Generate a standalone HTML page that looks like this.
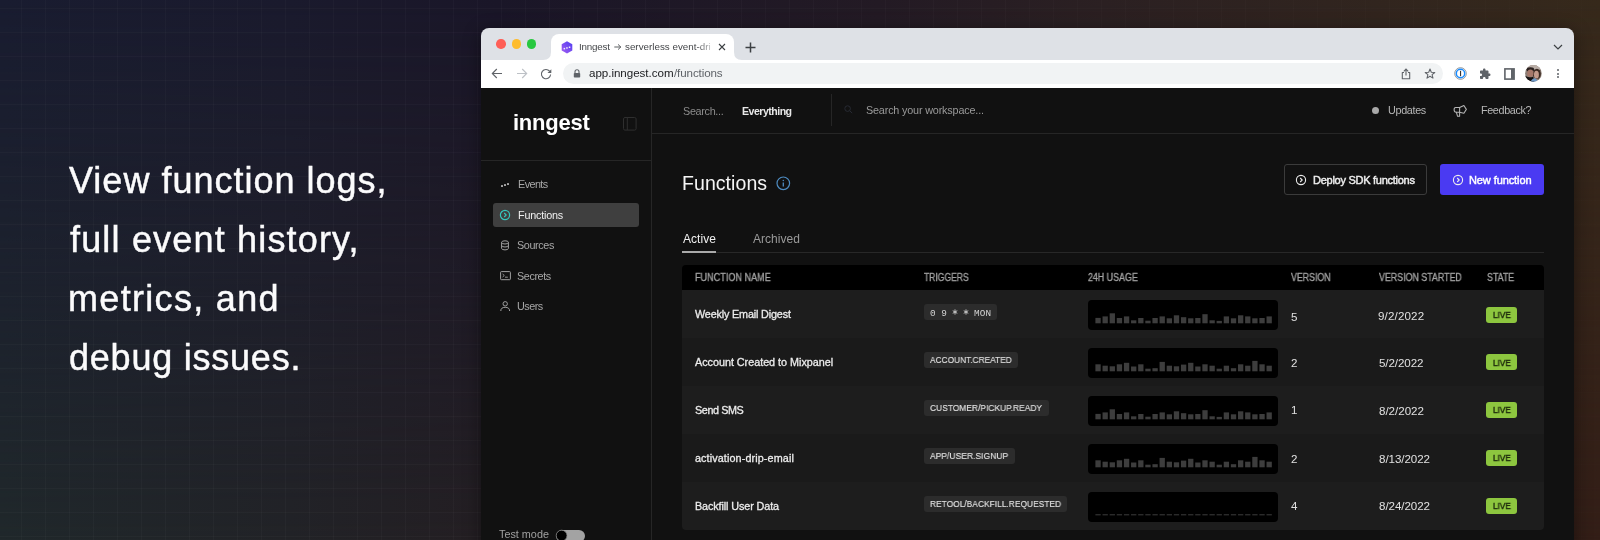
<!DOCTYPE html>
<html><head><meta charset="utf-8">
<style>
html,body{margin:0;padding:0;width:1600px;height:540px;overflow:hidden;}
body{position:relative;font-family:"Liberation Sans",sans-serif;background:#1c1c2a;}
.bg{position:absolute;left:0;top:0;width:1600px;height:540px;
 background:linear-gradient(90deg,#20282b 0%,#222327 18%,#241f23 30%,#2b2020 60%,#331e17 100%);}
.bg2{position:absolute;left:0;top:0;width:1600px;height:540px;
 background:linear-gradient(90deg,#191c30 0%,#1a1a2d 18%,#1a1628 31%,#231a24 55%,#2b2022 69%,#36291b 100%);
 -webkit-mask-image:linear-gradient(180deg,#000 0%,rgba(0,0,0,0.55) 50%,rgba(0,0,0,0) 100%);}
.grid{position:absolute;left:0;top:0;width:1600px;height:540px;
 background-image:
  linear-gradient(90deg, rgba(255,255,255,0.022) 1px, transparent 1px),
  linear-gradient(180deg, rgba(255,255,255,0.022) 1px, transparent 1px);
 background-size:24px 24px;background-position:21px 8px;
 -webkit-mask-image:linear-gradient(90deg,#000 0%,#000 40%,rgba(0,0,0,0.35) 100%);}
.shadow{position:absolute;left:481px;top:28px;width:1093px;height:540px;border-radius:8px 8px 0 0;box-shadow:0 4px 18px rgba(0,0,0,0.45);}
.tx{position:absolute;white-space:nowrap;transform-origin:0 0;will-change:transform;}
.abs{position:absolute;}
</style></head><body>
<div class="bg"></div>
<div class="bg2"></div>
<div class="grid"></div>
<div class="shadow"></div>

<div class="abs" style="left:481px;top:28px;width:1093px;height:32px;background:#dee1e6;border-radius:8px 8px 0 0;"></div>
<div class="abs" style="left:496.45px;top:39.45px;width:9.5px;height:9.5px;background:#fe5f57;border-radius:50%;"></div>
<div class="abs" style="left:511.65px;top:39.45px;width:9.5px;height:9.5px;background:#febc2e;border-radius:50%;"></div>
<div class="abs" style="left:526.85px;top:39.45px;width:9.5px;height:9.5px;background:#28c840;border-radius:50%;"></div>
<div class="abs" style="left:551px;top:34px;width:183px;height:26px;background:#ffffff;border-radius:8px 8px 0 0;"></div>
<svg class="abs" style="left:543px;top:52px" width="8" height="8"><path d="M0 8 Q8 8 8 0 L8 8 Z" fill="#fff"/></svg>
<svg class="abs" style="left:734px;top:52px" width="8" height="8"><path d="M8 8 Q0 8 0 0 L0 8 Z" fill="#fff"/></svg>
<svg class="abs" style="left:560.5px;top:40.5px" width="12" height="13" viewBox="0 0 12 13">
<defs><linearGradient id="fg" x1="1" y1="0" x2="0" y2="1"><stop offset="0" stop-color="#4f3df0"/><stop offset="1" stop-color="#a45ef2"/></linearGradient></defs>
<path d="M6 0.3 L11.3 3.3 L11.3 9.5 L6 12.6 L0.7 9.5 L0.7 3.3 Z" fill="url(#fg)"/>
<rect x="2.6" y="6.9" width="1.5" height="1.5" fill="#fff" opacity=".9"/><rect x="5.2" y="6.2" width="1.5" height="1.5" fill="#fff" opacity=".9"/><rect x="7.8" y="5.5" width="1.5" height="1.5" fill="#fff" opacity=".9"/>
</svg>
<svg class="abs" style="left:718px;top:43px" width="8" height="8"><path d="M1 1 L7 7 M7 1 L1 7" stroke="#3c4043" stroke-width="1.1"/></svg>
<svg class="abs" style="left:614px;top:43.8px" width="8" height="6"><path d="M0.3 3 H6.8 M4 0.4 L6.8 3 L4 5.6" stroke="#55585c" stroke-width="0.95" fill="none"/></svg>
<svg class="abs" style="left:745px;top:41.5px" width="11" height="11"><path d="M5.5 0.5 V10.5 M0.5 5.5 H10.5" stroke="#3c4043" stroke-width="1.5"/></svg>
<svg class="abs" style="left:1553px;top:44px" width="10" height="6"><path d="M1 1 L5 5 L9 1" stroke="#3c4043" stroke-width="1.2" fill="none"/></svg>
<div class="abs" style="left:481px;top:60px;width:1093px;height:28px;background:#ffffff;"></div>
<div class="abs" style="left:563px;top:63px;width:880px;height:21px;background:#f1f3f4;border-radius:10.5px;"></div>
<svg class="abs" style="left:491px;top:68px" width="12" height="11"><path d="M11 5.5 H1.5 M5.8 1 L1.3 5.5 L5.8 10" stroke="#5f6368" stroke-width="1.1" fill="none"/></svg>
<svg class="abs" style="left:516px;top:68px" width="12" height="11"><path d="M1 5.5 H10.5 M6.2 1 L10.7 5.5 L6.2 10" stroke="#bdc1c6" stroke-width="1.1" fill="none"/></svg>
<svg class="abs" style="left:540px;top:67.5px" width="12" height="12"><path d="M9.6 3.2 A4.6 4.6 0 1 0 10.6 6.5" stroke="#5f6368" stroke-width="1.1" fill="none"/><path d="M11.3 1.2 L11.3 5 L7.5 5 Z" fill="#5f6368"/></svg>
<svg class="abs" style="left:573px;top:69px" width="8" height="9"><path d="M2 4 V2.8 A2 2 0 0 1 6 2.8 V4" stroke="#5f6368" stroke-width="1.1" fill="none"/><rect x="0.8" y="4" width="6.4" height="4.6" rx="0.8" fill="#5f6368"/></svg>
<svg class="abs" style="left:1400.5px;top:67.5px" width="10" height="12"><path d="M3 4.5 H1.3 V10.8 H8.7 V4.5 H7" stroke="#5f6368" stroke-width="1.1" fill="none" stroke-linejoin="round"/><path d="M5 1.2 V7.5 M2.8 3.3 L5 1.1 L7.2 3.3" stroke="#5f6368" stroke-width="1.1" fill="none"/></svg>
<svg class="abs" style="left:1424px;top:68px" width="12" height="11" viewBox="0 0 24 22"><path d="M12 2 L14.6 8.6 L21.6 9 L16.2 13.4 L18 20.2 L12 16.4 L6 20.2 L7.8 13.4 L2.4 9 L9.4 8.6 Z" stroke="#5f6368" stroke-width="2.1" fill="none" stroke-linejoin="round"/></svg>
<svg class="abs" style="left:1454px;top:67px" width="13" height="13"><circle cx="6.5" cy="6.5" r="5.8" fill="#fff" stroke="#6b6b6b" stroke-width="0.7"/><circle cx="6.5" cy="6.5" r="4.2" fill="#fff" stroke="#1a8cff" stroke-width="1.5"/><rect x="6" y="3.8" width="1.1" height="5.4" fill="#333"/></svg>
<svg class="abs" style="left:1479px;top:67.5px" width="12" height="12" viewBox="0 0 24 24"><path d="M20.5 11H19V7c0-1.1-.9-2-2-2h-4V3.5C13 2.12 11.88 1 10.5 1S8 2.12 8 3.5V5H4c-1.1 0-1.99.9-1.99 2v3.8H3.5c1.49 0 2.7 1.21 2.7 2.7s-1.21 2.7-2.7 2.7H2V20c0 1.1.9 2 2 2h3.8v-1.5c0-1.49 1.21-2.7 2.7-2.7 1.49 0 2.7 1.21 2.7 2.7V22H17c1.1 0 2-.9 2-2v-4h1.5c1.38 0 2.5-1.12 2.5-2.5S21.88 11 20.5 11z" fill="#5f6368"/></svg>
<svg class="abs" style="left:1503.5px;top:67.5px" width="11" height="12"><rect x="0.9" y="0.9" width="9.2" height="10.2" fill="none" stroke="#5f6368" stroke-width="1.6"/><rect x="7" y="1" width="3" height="10" fill="#5f6368"/></svg>
<svg class="abs" style="left:1525px;top:65px" width="16.8" height="16.8" viewBox="70 65 375 375"><defs><clipPath id="av"><circle cx="257.5" cy="252.5" r="186"/></clipPath></defs>
<g clip-path="url(#av)"><rect x="0" y="0" width="600" height="600" fill="#8c7e76"/><ellipse cx="300" cy="110" rx="160" ry="70" fill="#b9ada6"/>
<ellipse cx="335" cy="265" rx="88" ry="115" fill="#3a2820"/><ellipse cx="325" cy="280" rx="55" ry="88" fill="#c29a8b"/>
<ellipse cx="190" cy="168" rx="88" ry="55" fill="#2a211f"/><ellipse cx="190" cy="250" rx="70" ry="85" fill="#a6786a"/>
<path d="M60 290 Q120 360 255 325 L280 460 L60 460 Z" fill="#161212"/><path d="M185 460 Q215 365 300 360 Q345 385 360 460 Z" fill="#6d98c6"/></g></svg>
<div class="abs" style="left:1556.7px;top:68.60000000000001px;width:2.2px;height:2.2px;background:#5f6368;border-radius:50%;"></div>
<div class="abs" style="left:1556.7px;top:72.5px;width:2.2px;height:2.2px;background:#5f6368;border-radius:50%;"></div>
<div class="abs" style="left:1556.7px;top:76.30000000000001px;width:2.2px;height:2.2px;background:#5f6368;border-radius:50%;"></div>
<div class="abs" style="left:481px;top:88px;width:1093px;height:452px;background:#111111;"></div>
<div class="abs" style="left:651px;top:88px;width:1px;height:452px;background:#262626;"></div>
<div class="abs" style="left:481px;top:159.5px;width:170px;height:1px;background:#262626;"></div>
<div class="abs" style="left:652px;top:133px;width:922px;height:1px;background:#262626;"></div>
<div class="abs" style="left:831px;top:94px;width:1px;height:32px;background:#262626;"></div>
<svg class="abs" style="left:623px;top:117px" width="14" height="14"><rect x="0.5" y="0.5" width="12.6" height="12.6" rx="1.5" fill="none" stroke="#2f2f2f" stroke-width="1"/><path d="M4.3 0.5 V13" stroke="#2f2f2f" stroke-width="1"/></svg>
<div class="abs" style="left:493px;top:202.5px;width:146px;height:24.7px;background:#3f3f3f;border-radius:3px;"></div>
<div class="abs" style="left:500.9px;top:184.9px;width:2px;height:2px;background:#a8a8a8;border-radius:0.5px;"></div>
<div class="abs" style="left:504px;top:183.8px;width:2px;height:2px;background:#a8a8a8;border-radius:0.5px;"></div>
<div class="abs" style="left:507px;top:182.8px;width:2px;height:2px;background:#a8a8a8;border-radius:0.5px;"></div>
<svg class="abs" style="left:499px;top:209px" width="12" height="12"><circle cx="6" cy="6" r="4.6" fill="none" stroke="#36c6bd" stroke-width="1.2"/><path d="M5.2 4 L7.2 6 L5.2 8" fill="none" stroke="#36c6bd" stroke-width="1.1"/></svg>
<svg class="abs" style="left:500px;top:240px" width="10" height="11"><ellipse cx="5" cy="2.4" rx="3.4" ry="1.6" fill="none" stroke="#a0a0a0" stroke-width="1"/><path d="M1.6 2.4 V8.3 A3.4 1.6 0 0 0 8.4 8.3 V2.4 M1.6 5.4 A3.4 1.6 0 0 0 8.4 5.4" fill="none" stroke="#a0a0a0" stroke-width="1"/></svg>
<svg class="abs" style="left:499.5px;top:271.3px" width="11" height="9.5"><rect x="0.6" y="0.6" width="9.8" height="8.1" rx="0.8" fill="none" stroke="#a0a0a0" stroke-width="1"/><path d="M2.6 3 L4.3 4.5 L2.6 6 M5 6.2 H7.8" fill="none" stroke="#a0a0a0" stroke-width="0.9"/></svg>
<svg class="abs" style="left:500px;top:301px" width="10.5" height="10.5"><circle cx="5.2" cy="2.8" r="2.2" fill="none" stroke="#a0a0a0" stroke-width="1"/><path d="M0.8 10 Q0.8 6.3 5.2 6.3 Q9.6 6.3 9.6 10" fill="none" stroke="#a0a0a0" stroke-width="1"/></svg>
<div class="abs" style="left:556px;top:529.6px;width:29px;height:12px;background:#a3a3a3;border-radius:6px;"></div>
<svg class="abs" style="left:555px;top:529px" width="14" height="14"><circle cx="6.6" cy="6.6" r="5.4" fill="#000" stroke="#8a8a8a" stroke-width="0.7"/></svg>
<svg class="abs" style="left:844px;top:105px" width="9" height="9"><circle cx="3.6" cy="3.6" r="2.8" fill="none" stroke="#272a33" stroke-width="1"/><path d="M5.6 5.6 L8.2 8.2" stroke="#272a33" stroke-width="1"/></svg>
<div class="abs" style="left:1371.5px;top:106.5px;width:7.8px;height:7.8px;background:#a9a9a9;border-radius:50%;"></div>
<svg class="abs" style="left:1448px;top:100px" width="24" height="22" viewBox="0 0 589 540"><g fill="none" stroke="#b5b5b5" stroke-width="26" stroke-linejoin="round" stroke-linecap="round"><path d="M285 185 L185 185 Q150 185 150 240 Q150 300 200 300 L285 300 Z"/><path d="M285 185 L390 135 L450 230 L390 325 L285 300"/><path d="M205 300 L235 400 L285 400 L285 300"/></g></svg>
<svg class="abs" style="left:775.5px;top:175.9px" width="15" height="15"><circle cx="7.3" cy="7.3" r="6.3" fill="none" stroke="#4e8cc2" stroke-width="1.2"/><path d="M7.3 6.4 V10.4" stroke="#4e8cc2" stroke-width="1.3"/><circle cx="7.3" cy="4.5" r="0.75" fill="#4e8cc2"/></svg>
<div class="abs" style="left:682px;top:251.5px;width:862px;height:1.3px;background:#282828;"></div>
<div class="abs" style="left:682.2px;top:251px;width:33.8px;height:2px;background:#aaaaaa;"></div>
<div class="abs" style="left:1283.8px;top:164px;width:143.4px;height:30.8px;background:transparent;border:1px solid #3b3b3b;border-radius:3px;box-sizing:border-box;"></div>
<div class="abs" style="left:1440px;top:164px;width:104px;height:31px;background:#4a3af2;border-radius:3px;"></div>
<svg class="abs" style="left:1295.2px;top:174px" width="12" height="12"><circle cx="6" cy="6" r="4.6" fill="none" stroke="#ededed" stroke-width="1.1"/><path d="M5.2 4 L7.2 6 L5.2 8" fill="none" stroke="#ededed" stroke-width="1.1"/></svg>
<svg class="abs" style="left:1451.8px;top:174px" width="12" height="12"><circle cx="6" cy="6" r="4.6" fill="none" stroke="#ededed" stroke-width="1.1"/><path d="M5.2 4 L7.2 6 L5.2 8" fill="none" stroke="#ededed" stroke-width="1.1"/></svg>
<div class="abs" style="left:682px;top:265px;width:862px;height:265px;border-radius:4px;overflow:hidden;">
<div class="abs" style="left:0;top:0;width:862px;height:25px;background:#000;"></div>
<div class="abs" style="left:0;top:25px;width:862px;height:48px;background:#1d1d1d;"></div>
<div class="abs" style="left:0;top:73px;width:862px;height:48px;background:#1a1a1a;"></div>
<div class="abs" style="left:0;top:121px;width:862px;height:48px;background:#1d1d1d;"></div>
<div class="abs" style="left:0;top:169px;width:862px;height:48px;background:#1a1a1a;"></div>
<div class="abs" style="left:0;top:217px;width:862px;height:48px;background:#1d1d1d;"></div>
</div>
<div class="abs" style="left:924.2px;top:304.2px;width:72.6px;height:15.6px;background:#2c2c2c;border-radius:3px;"></div>
<div class="abs" style="left:1088px;top:299.8px;width:190px;height:30px;background:#000;border-radius:4px;"></div>
<div class="abs" style="left:1486.2px;top:306.9px;width:30.6px;height:16px;background:#8dc63f;border-radius:3px;"></div>
<div class="abs" style="left:924.2px;top:352.2px;width:94px;height:15.6px;background:#2c2c2c;border-radius:3px;"></div>
<div class="abs" style="left:1088px;top:347.8px;width:190px;height:30px;background:#000;border-radius:4px;"></div>
<div class="abs" style="left:1486.2px;top:354.2px;width:30.6px;height:16px;background:#8dc63f;border-radius:3px;"></div>
<div class="abs" style="left:924.2px;top:400.2px;width:124.4px;height:15.6px;background:#2c2c2c;border-radius:3px;"></div>
<div class="abs" style="left:1088px;top:395.8px;width:190px;height:30px;background:#000;border-radius:4px;"></div>
<div class="abs" style="left:1486.2px;top:402px;width:30.6px;height:16px;background:#8dc63f;border-radius:3px;"></div>
<div class="abs" style="left:924.2px;top:448.2px;width:90.6px;height:15.6px;background:#2c2c2c;border-radius:3px;"></div>
<div class="abs" style="left:1088px;top:443.8px;width:190px;height:30px;background:#000;border-radius:4px;"></div>
<div class="abs" style="left:1486.2px;top:450.1px;width:30.6px;height:16px;background:#8dc63f;border-radius:3px;"></div>
<div class="abs" style="left:924.2px;top:496.2px;width:143px;height:15.6px;background:#2c2c2c;border-radius:3px;"></div>
<div class="abs" style="left:1088px;top:491.8px;width:190px;height:30px;background:#000;border-radius:4px;"></div>
<div class="abs" style="left:1486.2px;top:498px;width:30.6px;height:16px;background:#8dc63f;border-radius:3px;"></div>
<svg class="abs" style="left:1088px;top:299.8px" width="190" height="30" fill="#3d3d3d"><rect x="7.40" y="17.90" width="5.3" height="5.4"/><rect x="14.53" y="16.40" width="5.3" height="6.9"/><rect x="21.66" y="13.30" width="5.3" height="10"/><rect x="28.79" y="18.00" width="5.3" height="5.3"/><rect x="35.92" y="16.40" width="5.3" height="6.9"/><rect x="43.05" y="20.30" width="5.3" height="3"/><rect x="50.18" y="18.00" width="5.3" height="5.3"/><rect x="57.31" y="20.70" width="5.3" height="2.6"/><rect x="64.44" y="18.00" width="5.3" height="5.3"/><rect x="71.57" y="16.40" width="5.3" height="6.9"/><rect x="78.70" y="18.30" width="5.3" height="5"/><rect x="85.83" y="15.30" width="5.3" height="8"/><rect x="92.96" y="17.20" width="5.3" height="6.1"/><rect x="100.09" y="18.30" width="5.3" height="5"/><rect x="107.22" y="18.00" width="5.3" height="5.3"/><rect x="114.35" y="14.20" width="5.3" height="9.1"/><rect x="121.48" y="20.30" width="5.3" height="3"/><rect x="128.61" y="20.90" width="5.3" height="2.4"/><rect x="135.74" y="16.40" width="5.3" height="6.9"/><rect x="142.87" y="18.30" width="5.3" height="5"/><rect x="150.00" y="15.30" width="5.3" height="8"/><rect x="157.13" y="16.40" width="5.3" height="6.9"/><rect x="164.26" y="18.30" width="5.3" height="5"/><rect x="171.39" y="18.00" width="5.3" height="5.3"/><rect x="178.52" y="16.40" width="5.3" height="6.9"/></svg>
<svg class="abs" style="left:1088px;top:347.8px" width="190" height="30" fill="#3d3d3d"><rect x="7.40" y="16.30" width="5.3" height="7.0"/><rect x="14.53" y="17.70" width="5.3" height="5.6"/><rect x="21.66" y="18.30" width="5.3" height="5.0"/><rect x="28.79" y="16.30" width="5.3" height="7.0"/><rect x="35.92" y="14.80" width="5.3" height="8.5"/><rect x="43.05" y="18.50" width="5.3" height="4.8"/><rect x="50.18" y="16.30" width="5.3" height="7.0"/><rect x="57.31" y="20.70" width="5.3" height="2.6"/><rect x="64.44" y="20.20" width="5.3" height="3.1"/><rect x="71.57" y="13.90" width="5.3" height="9.4"/><rect x="78.70" y="17.70" width="5.3" height="5.6"/><rect x="85.83" y="18.30" width="5.3" height="5.0"/><rect x="92.96" y="16.60" width="5.3" height="6.7"/><rect x="100.09" y="14.80" width="5.3" height="8.5"/><rect x="107.22" y="18.50" width="5.3" height="4.8"/><rect x="114.35" y="16.30" width="5.3" height="7.0"/><rect x="121.48" y="17.70" width="5.3" height="5.6"/><rect x="128.61" y="20.70" width="5.3" height="2.6"/><rect x="135.74" y="17.70" width="5.3" height="5.6"/><rect x="142.87" y="20.20" width="5.3" height="3.1"/><rect x="150.00" y="16.30" width="5.3" height="7.0"/><rect x="157.13" y="17.70" width="5.3" height="5.6"/><rect x="164.26" y="12.90" width="5.3" height="10.4"/><rect x="171.39" y="16.30" width="5.3" height="7.0"/><rect x="178.52" y="17.70" width="5.3" height="5.6"/></svg>
<svg class="abs" style="left:1088px;top:395.8px" width="190" height="30" fill="#3d3d3d"><rect x="7.40" y="17.90" width="5.3" height="5.4"/><rect x="14.53" y="16.40" width="5.3" height="6.9"/><rect x="21.66" y="13.30" width="5.3" height="10"/><rect x="28.79" y="18.00" width="5.3" height="5.3"/><rect x="35.92" y="16.40" width="5.3" height="6.9"/><rect x="43.05" y="20.30" width="5.3" height="3"/><rect x="50.18" y="18.00" width="5.3" height="5.3"/><rect x="57.31" y="20.70" width="5.3" height="2.6"/><rect x="64.44" y="18.00" width="5.3" height="5.3"/><rect x="71.57" y="16.40" width="5.3" height="6.9"/><rect x="78.70" y="18.30" width="5.3" height="5"/><rect x="85.83" y="15.30" width="5.3" height="8"/><rect x="92.96" y="17.20" width="5.3" height="6.1"/><rect x="100.09" y="18.30" width="5.3" height="5"/><rect x="107.22" y="18.00" width="5.3" height="5.3"/><rect x="114.35" y="14.20" width="5.3" height="9.1"/><rect x="121.48" y="20.30" width="5.3" height="3"/><rect x="128.61" y="20.90" width="5.3" height="2.4"/><rect x="135.74" y="16.40" width="5.3" height="6.9"/><rect x="142.87" y="18.30" width="5.3" height="5"/><rect x="150.00" y="15.30" width="5.3" height="8"/><rect x="157.13" y="16.40" width="5.3" height="6.9"/><rect x="164.26" y="18.30" width="5.3" height="5"/><rect x="171.39" y="18.00" width="5.3" height="5.3"/><rect x="178.52" y="16.40" width="5.3" height="6.9"/></svg>
<svg class="abs" style="left:1088px;top:443.8px" width="190" height="30" fill="#3d3d3d"><rect x="7.40" y="16.30" width="5.3" height="7.0"/><rect x="14.53" y="17.70" width="5.3" height="5.6"/><rect x="21.66" y="18.30" width="5.3" height="5.0"/><rect x="28.79" y="16.30" width="5.3" height="7.0"/><rect x="35.92" y="14.80" width="5.3" height="8.5"/><rect x="43.05" y="18.50" width="5.3" height="4.8"/><rect x="50.18" y="16.30" width="5.3" height="7.0"/><rect x="57.31" y="20.70" width="5.3" height="2.6"/><rect x="64.44" y="20.20" width="5.3" height="3.1"/><rect x="71.57" y="13.90" width="5.3" height="9.4"/><rect x="78.70" y="17.70" width="5.3" height="5.6"/><rect x="85.83" y="18.30" width="5.3" height="5.0"/><rect x="92.96" y="16.60" width="5.3" height="6.7"/><rect x="100.09" y="14.80" width="5.3" height="8.5"/><rect x="107.22" y="18.50" width="5.3" height="4.8"/><rect x="114.35" y="16.30" width="5.3" height="7.0"/><rect x="121.48" y="17.70" width="5.3" height="5.6"/><rect x="128.61" y="20.70" width="5.3" height="2.6"/><rect x="135.74" y="17.70" width="5.3" height="5.6"/><rect x="142.87" y="20.20" width="5.3" height="3.1"/><rect x="150.00" y="16.30" width="5.3" height="7.0"/><rect x="157.13" y="17.70" width="5.3" height="5.6"/><rect x="164.26" y="12.90" width="5.3" height="10.4"/><rect x="171.39" y="16.30" width="5.3" height="7.0"/><rect x="178.52" y="17.70" width="5.3" height="5.6"/></svg>
<svg class="abs" style="left:1088px;top:491.8px" width="190" height="30" fill="#3d3d3d"><rect x="7.40" y="22.30" width="5.3" height="1.0"/><rect x="14.53" y="22.30" width="5.3" height="1.0"/><rect x="21.66" y="22.30" width="5.3" height="1.0"/><rect x="28.79" y="22.30" width="5.3" height="1.0"/><rect x="35.92" y="22.30" width="5.3" height="1.0"/><rect x="43.05" y="22.30" width="5.3" height="1.0"/><rect x="50.18" y="22.30" width="5.3" height="1.0"/><rect x="57.31" y="22.30" width="5.3" height="1.0"/><rect x="64.44" y="22.30" width="5.3" height="1.0"/><rect x="71.57" y="22.30" width="5.3" height="1.0"/><rect x="78.70" y="22.30" width="5.3" height="1.0"/><rect x="85.83" y="22.30" width="5.3" height="1.0"/><rect x="92.96" y="22.30" width="5.3" height="1.0"/><rect x="100.09" y="22.30" width="5.3" height="1.0"/><rect x="107.22" y="22.30" width="5.3" height="1.0"/><rect x="114.35" y="22.30" width="5.3" height="1.0"/><rect x="121.48" y="22.30" width="5.3" height="1.0"/><rect x="128.61" y="22.30" width="5.3" height="1.0"/><rect x="135.74" y="22.30" width="5.3" height="1.0"/><rect x="142.87" y="22.30" width="5.3" height="1.0"/><rect x="150.00" y="22.30" width="5.3" height="1.0"/><rect x="157.13" y="22.30" width="5.3" height="1.0"/><rect x="164.26" y="22.30" width="5.3" height="1.0"/><rect x="171.39" y="22.30" width="5.3" height="1.0"/><rect x="178.52" y="22.30" width="5.3" height="1.0"/></svg>
<svg class="abs" style="left:951.5px;top:309.4px" width="6" height="6"><g stroke="#d0d0d0" stroke-width="0.9"><path d="M3 0.4 V5.6"/><path d="M0.75 1.7 L5.25 4.3"/><path d="M5.25 1.7 L0.75 4.3"/></g></svg>
<svg class="abs" style="left:962.6px;top:309.4px" width="6" height="6"><g stroke="#d0d0d0" stroke-width="0.9"><path d="M3 0.4 V5.6"/><path d="M0.75 1.7 L5.25 4.3"/><path d="M5.25 1.7 L0.75 4.3"/></g></svg>
<span class="tx" style="left:69.00px;top:162.60px;font-size:36px;line-height:36px;color:#fbfbfc;letter-spacing:0.999px;-webkit-text-stroke:0.45px #fbfbfc;">View function logs,</span>
<span class="tx" style="left:70.40px;top:222.00px;font-size:36px;line-height:36px;color:#fbfbfc;letter-spacing:1.175px;-webkit-text-stroke:0.45px #fbfbfc;">full event history,</span>
<span class="tx" style="left:68.40px;top:281.30px;font-size:36px;line-height:36px;color:#fbfbfc;letter-spacing:1.314px;-webkit-text-stroke:0.45px #fbfbfc;">metrics, and</span>
<span class="tx" style="left:69.40px;top:339.50px;font-size:36px;line-height:36px;color:#fbfbfc;letter-spacing:0.771px;-webkit-text-stroke:0.45px #fbfbfc;">debug issues.</span>
<span class="tx" style="left:579.00px;top:41.57px;font-size:9.8px;line-height:9.8px;color:#45474a;letter-spacing:-0.186px;">Inngest</span>
<span class="tx" style="left:624.90px;top:41.57px;font-size:9.8px;line-height:9.8px;color:#45474a;letter-spacing:0.010px;-webkit-mask-image:linear-gradient(90deg,#000 0,#000 72px,rgba(0,0,0,0.1) 90px);">serverless event-dri</span>
<span class="tx" style="left:589.00px;top:67.44px;font-size:11.6px;line-height:11.6px;color:#202124;letter-spacing:-0.037px;">app.inngest.com</span>
<span class="tx" style="left:673.60px;top:67.44px;font-size:11.6px;line-height:11.6px;color:#5f6368;letter-spacing:-0.114px;">/functions</span>
<span class="tx" style="left:512.60px;top:111.50px;font-size:22px;line-height:22px;font-weight:700;color:#ffffff;letter-spacing:-0.250px;">inngest</span>
<span class="tx" style="left:682.60px;top:105.72px;font-size:10.8px;line-height:10.8px;color:#8c8c8c;letter-spacing:-0.314px;">Search...</span>
<span class="tx" style="left:741.80px;top:105.99px;font-size:10.6px;line-height:10.6px;font-weight:700;color:#e8e8e8;letter-spacing:-0.520px;">Everything</span>
<span class="tx" style="left:865.90px;top:105.22px;font-size:10.8px;line-height:10.8px;color:#9a9a9a;letter-spacing:-0.166px;">Search your workspace...</span>
<span class="tx" style="left:1387.90px;top:104.82px;font-size:10.8px;line-height:10.8px;color:#b8b8b8;letter-spacing:-0.336px;">Updates</span>
<span class="tx" style="left:1480.50px;top:104.82px;font-size:10.8px;line-height:10.8px;color:#b8b8b8;letter-spacing:-0.364px;">Feedback?</span>
<span class="tx" style="left:517.50px;top:178.82px;font-size:10.8px;line-height:10.8px;color:#a8a8a8;letter-spacing:-0.562px;">Events</span>
<span class="tx" style="left:517.50px;top:209.52px;font-size:10.8px;line-height:10.8px;color:#f0f0f0;letter-spacing:-0.201px;">Functions</span>
<span class="tx" style="left:517.40px;top:239.82px;font-size:10.8px;line-height:10.8px;color:#a8a8a8;letter-spacing:-0.385px;">Sources</span>
<span class="tx" style="left:517.40px;top:270.62px;font-size:10.8px;line-height:10.8px;color:#a8a8a8;letter-spacing:-0.401px;">Secrets</span>
<span class="tx" style="left:517.40px;top:300.92px;font-size:10.8px;line-height:10.8px;color:#a8a8a8;letter-spacing:-0.499px;">Users</span>
<span class="tx" style="left:499.00px;top:529.02px;font-size:10.8px;line-height:10.8px;color:#a0a0a0;letter-spacing:0.012px;">Test mode</span>
<span class="tx" style="left:682.10px;top:174.03px;font-size:19.5px;line-height:19.5px;color:#f5f5f5;letter-spacing:0.064px;">Functions</span>
<span class="tx" style="left:682.70px;top:233.10px;font-size:12px;line-height:12px;color:#f0f0f0;letter-spacing:0.039px;">Active</span>
<span class="tx" style="left:752.90px;top:233.10px;font-size:12px;line-height:12px;color:#9a9a9a;letter-spacing:0.041px;">Archived</span>
<span class="tx" style="left:1312.60px;top:174.95px;font-size:11px;line-height:11px;color:#ededed;letter-spacing:-0.268px;-webkit-text-stroke:0.45px #ededed;">Deploy SDK functions</span>
<span class="tx" style="left:1469.00px;top:174.95px;font-size:11px;line-height:11px;color:#ffffff;letter-spacing:-0.097px;-webkit-text-stroke:0.45px #ffffff;">New function</span>
<span class="tx" style="left:694.80px;top:272.80px;font-size:10px;line-height:10px;color:#a3a3a3;transform:scaleX(0.9084);-webkit-text-stroke:0.3px #a3a3a3;">FUNCTION NAME</span>
<span class="tx" style="left:924.00px;top:272.90px;font-size:10px;line-height:10px;color:#a3a3a3;transform:scaleX(0.8562);-webkit-text-stroke:0.3px #a3a3a3;">TRIGGERS</span>
<span class="tx" style="left:1088.40px;top:272.80px;font-size:10px;line-height:10px;color:#a3a3a3;transform:scaleX(0.8873);-webkit-text-stroke:0.3px #a3a3a3;">24H USAGE</span>
<span class="tx" style="left:1290.60px;top:272.80px;font-size:10px;line-height:10px;color:#a3a3a3;transform:scaleX(0.8797);-webkit-text-stroke:0.3px #a3a3a3;">VERSION</span>
<span class="tx" style="left:1379.00px;top:272.80px;font-size:10px;line-height:10px;color:#a3a3a3;transform:scaleX(0.8852);-webkit-text-stroke:0.3px #a3a3a3;">VERSION STARTED</span>
<span class="tx" style="left:1486.50px;top:272.80px;font-size:10px;line-height:10px;color:#a3a3a3;transform:scaleX(0.8850);-webkit-text-stroke:0.3px #a3a3a3;">STATE</span>
<span class="tx" style="left:694.70px;top:309.32px;font-size:10.8px;line-height:10.8px;color:#ececec;letter-spacing:-0.161px;-webkit-text-stroke:0.3px #ececec;">Weekly Email Digest</span>
<span class="tx" style="left:929.90px;top:309.43px;font-size:9.35px;line-height:9.35px;font-family:'Liberation Mono';color:#d4d4d4;">0 9</span>
<span class="tx" style="left:973.80px;top:309.43px;font-size:9.35px;line-height:9.35px;font-family:'Liberation Mono';color:#d4d4d4;letter-spacing:0.093px;">MON</span>
<span class="tx" style="left:1290.80px;top:311.04px;font-size:11.6px;line-height:11.6px;color:#e0e0e0;">5</span>
<span class="tx" style="left:1378.10px;top:310.04px;font-size:11.6px;line-height:11.6px;color:#e0e0e0;letter-spacing:0.138px;">9/2/2022</span>
<span class="tx" style="left:1492.80px;top:310.65px;font-size:9px;line-height:9px;color:#1f2d0d;transform:scaleX(0.9124);-webkit-text-stroke:0.45px #1f2d0d;">LIVE</span>
<span class="tx" style="left:694.70px;top:357.32px;font-size:10.8px;line-height:10.8px;color:#ececec;letter-spacing:-0.021px;-webkit-text-stroke:0.3px #ececec;">Account Created to Mixpanel</span>
<span class="tx" style="left:930.20px;top:355.07px;font-size:9.8px;line-height:9.8px;color:#dedede;transform:scaleX(0.8503);-webkit-text-stroke:0.2px #dedede;">ACCOUNT.CREATED</span>
<span class="tx" style="left:1290.80px;top:356.64px;font-size:11.6px;line-height:11.6px;color:#e0e0e0;">2</span>
<span class="tx" style="left:1379.20px;top:356.64px;font-size:11.6px;line-height:11.6px;color:#e0e0e0;letter-spacing:-0.097px;">5/2/2022</span>
<span class="tx" style="left:1492.80px;top:358.95px;font-size:9px;line-height:9px;color:#1f2d0d;transform:scaleX(0.9124);-webkit-text-stroke:0.45px #1f2d0d;">LIVE</span>
<span class="tx" style="left:694.70px;top:405.32px;font-size:10.8px;line-height:10.8px;color:#ececec;letter-spacing:-0.402px;-webkit-text-stroke:0.3px #ececec;">Send SMS</span>
<span class="tx" style="left:930.20px;top:403.07px;font-size:9.8px;line-height:9.8px;color:#dedede;transform:scaleX(0.8596);-webkit-text-stroke:0.2px #dedede;">CUSTOMER/PICKUP.READY</span>
<span class="tx" style="left:1290.80px;top:404.24px;font-size:11.6px;line-height:11.6px;color:#e0e0e0;">1</span>
<span class="tx" style="left:1378.70px;top:404.64px;font-size:11.6px;line-height:11.6px;color:#e0e0e0;letter-spacing:-0.026px;">8/2/2022</span>
<span class="tx" style="left:1492.80px;top:405.75px;font-size:9px;line-height:9px;color:#1f2d0d;transform:scaleX(0.9124);-webkit-text-stroke:0.45px #1f2d0d;">LIVE</span>
<span class="tx" style="left:694.70px;top:453.32px;font-size:10.8px;line-height:10.8px;color:#ececec;letter-spacing:0.110px;-webkit-text-stroke:0.3px #ececec;">activation-drip-email</span>
<span class="tx" style="left:930.20px;top:451.07px;font-size:9.8px;line-height:9.8px;color:#dedede;transform:scaleX(0.8705);-webkit-text-stroke:0.2px #dedede;">APP/USER.SIGNUP</span>
<span class="tx" style="left:1290.80px;top:452.64px;font-size:11.6px;line-height:11.6px;color:#e0e0e0;">2</span>
<span class="tx" style="left:1378.70px;top:452.64px;font-size:11.6px;line-height:11.6px;color:#e0e0e0;letter-spacing:-0.066px;">8/13/2022</span>
<span class="tx" style="left:1492.80px;top:453.85px;font-size:9px;line-height:9px;color:#1f2d0d;transform:scaleX(0.9124);-webkit-text-stroke:0.45px #1f2d0d;">LIVE</span>
<span class="tx" style="left:694.70px;top:501.32px;font-size:10.8px;line-height:10.8px;color:#ececec;letter-spacing:-0.100px;-webkit-text-stroke:0.3px #ececec;">Backfill User Data</span>
<span class="tx" style="left:930.20px;top:499.07px;font-size:9.8px;line-height:9.8px;color:#dedede;transform:scaleX(0.8578);-webkit-text-stroke:0.2px #dedede;">RETOOL/BACKFILL.REQUESTED</span>
<span class="tx" style="left:1290.80px;top:500.04px;font-size:11.6px;line-height:11.6px;color:#e0e0e0;">4</span>
<span class="tx" style="left:1378.70px;top:500.14px;font-size:11.6px;line-height:11.6px;color:#e0e0e0;letter-spacing:-0.066px;">8/24/2022</span>
<span class="tx" style="left:1492.80px;top:501.75px;font-size:9px;line-height:9px;color:#1f2d0d;transform:scaleX(0.9124);-webkit-text-stroke:0.45px #1f2d0d;">LIVE</span>
</body></html>
